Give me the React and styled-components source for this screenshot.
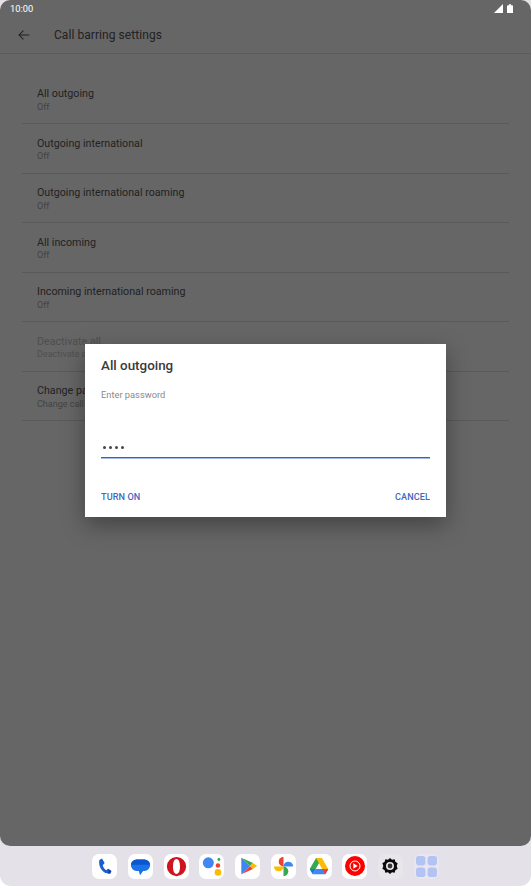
import React from 'react';
import styled, { createGlobalStyle } from 'styled-components';

const Global = createGlobalStyle`
  html, body { margin: 0; padding: 0; background: #fff; }
  body { font-family: Roboto, "Liberation Sans", sans-serif; }
`;

const Frame = styled.div`
  width: 531px; height: 886px; display: flex; flex-direction: column;
  background: #e5e1e8; border-radius: 0 0 11px 11px; overflow: hidden; position: relative;
`;
const Screen = styled.div`
  height: 846px; flex: none; position: relative; background: #fff;
  border-radius: 10px; overflow: hidden; display: flex; flex-direction: column;
`;
const Scrim = styled.div`
  position: absolute; inset: 0; background: rgba(0,0,0,.6); z-index: 1;
`;
const StatusBar = styled.div`
  height: 16px; padding: 0 18px 0 10px; display: flex; align-items: center; justify-content: space-between;
  position: relative; z-index: 2; color: #fff; font-size: 9.3px; font-weight: 400; flex: none;
`;
const StatusIcons = styled.div`display: flex; align-items: center; gap: 4px;`;
const AppBar = styled.div`
  height: 38px; flex: none; box-sizing: border-box; display: flex; align-items: center; gap: 23px; padding: 0 0 0 17px;
  border-bottom: 1px solid #e4e4e4; color: #555; font-size: 12px; letter-spacing: .06px;
`;
const List = styled.div`padding: 20.6px 22px 0; display: flex; flex-direction: column;`;
const Row = styled.div`
  height: 49.5px; box-sizing: border-box; padding: 12.5px 15px 0; border-bottom: 1px solid #dedede;
  display: flex; flex-direction: column;
`;
const RowTitle = styled.div`font-size: 10.7px; line-height: 13px; color: ${p => p.$off ? '#c4c4c4' : '#555'};`;
const RowSub = styled.div`font-size: 9px; line-height: 13px; margin-top: .9px; color: ${p => p.$off ? '#c8c8c8' : '#a8a8a8'};`;

const Dialog = styled.div`
  position: absolute; left: 85px; top: 344px; width: 361px; height: 173px; background: #fff; z-index: 3;
  box-shadow: 0 8px 22px rgba(0,0,0,.35); box-sizing: border-box; padding: 14px 16px 0;
  display: flex; flex-direction: column;
`;
const DialogTitle = styled.div`font-size: 13.4px; line-height: 16px; font-weight: 500; color: #3a3a3a;`;
const Prompt = styled.div`font-size: 9.3px; line-height: 12px; margin-top: 14.5px; color: #8a8a8a;`;
const Field = styled.div`
  margin-top: 36px; height: 21px; border-bottom: 1px solid #3563bd; box-shadow: 0 1px 0 #a3bae8;
  display: flex; align-items: center; gap: 3.1px; padding: 2px 0 0 2px; box-sizing: border-box;
`;
const Dot = styled.span`width: 3px; height: 3px; border-radius: 50%; background: #444; flex: none;`;
const Actions = styled.div`display: flex; justify-content: space-between; margin-top: 33px;`;
const Action = styled.div`font-size: 9.1px; line-height: 12px; font-weight: 500; color: #3f68bd; letter-spacing: .1px;`;

const Dock = styled.div`
  flex: 1; display: flex; justify-content: center; align-items: center; gap: 10.7px;
`;
const Tile = styled.div`
  width: 25px; height: 25px; border-radius: 7px; flex: none; display: flex; align-items: center; justify-content: center;
  background: ${p => p.$bg || '#fff'};
`;

const Back = () => (
  <svg width="14" height="14" viewBox="0 0 24 24" fill="none" stroke="#555" strokeWidth="1.8">
    <path d="M21 12H4M11 4.5 3.5 12l7.5 7.5" />
  </svg>
);
const Signal = () => (
  <svg width="9" height="9" viewBox="0 0 9 9"><path d="M9 0v9H0z" fill="#fff" /></svg>
);
const Battery = () => (
  <svg width="6" height="9" viewBox="0 0 6 9"><path d="M1 1.2h1.2V0h1.6v1.2H5a1 1 0 0 1 1 .8V9H0V2a1 1 0 0 1 1-.8z" fill="#fff" /></svg>
);

const Phone = () => (
  <svg width="18" height="18" viewBox="0 0 24 24">
    <path d="M8 2 4.500 4C3.500 8 4.500 13 7.500 17s7 5.500 11.500 5l1.500-3.500-4.500-3-2.500 2c-2-.8-4-4-4.500-6.500L11.500 8z" fill="#1a5fd0" />
    <path d="M16 15.500l4.500 3L19 22c-1 .1-2 .1-3.500-.2l1.500-1.800z" fill="#123f9c" />
  </svg>
);
const Messages = () => (
  <svg width="21" height="21" viewBox="0 0 24 24">
    <path d="M7.500 4h9a6.500 6.500 0 0 1 0 13H15l-3.500 5L10 17H7.500a6.500 6.500 0 0 1 0-13z" fill="#1a73e8" />
    <path d="M7.500 4h9A6.500 6.500 0 0 1 23 10H1a6.500 6.500 0 0 1 6.500-6z" fill="#0b57cf" />
  </svg>
);
const Opera = () => (
  <svg width="21" height="21" viewBox="0 0 24 24">
    <path fillRule="evenodd" d="M12 1a11 11 0 1 1 0 22 11 11 0 0 1 0-22zm0 2.500c-2.600 0-4 3.800-4 8.500s1.400 8.500 4 8.500 4-3.800 4-8.500-1.400-8.500-4-8.500z" fill="#cf1420" />
  </svg>
);
const Assistant = () => (
  <svg width="22" height="22" viewBox="0 0 24 24">
    <circle cx="8" cy="8.500" r="6" fill="#4285f4" />
    <circle cx="18.500" cy="11.500" r="2.500" fill="#ea4335" />
    <circle cx="18.500" cy="19" r="3.600" fill="#fbbc04" />
    <circle cx="19.500" cy="5" r="1.600" fill="#34a853" />
  </svg>
);
const Play = () => (
  <svg width="20" height="20" viewBox="0 0 24 24">
    <path d="M4 2v20l10.500-10z" fill="#4285f4" />
    <path d="M4 2l10.500 10 3.500-3.500z" fill="#34a853" />
    <path d="M4 22l10.500-10 3.500 3.500z" fill="#ea4335" />
    <path d="M18 8.500 23 12l-5 3.500L14.500 12z" fill="#fbbc04" />
  </svg>
);
const Photos = () => (
  <svg width="21" height="21" viewBox="0 0 24 24">
    <path d="M12 12H1a5.500 5.500 0 0 0 11 0z" fill="#fbbc04" />
    <path d="M12 12V1a5.500 5.500 0 0 0 0 11z" fill="#ea4335" />
    <path d="M12 12h11a5.500 5.500 0 0 0-11 0z" fill="#4285f4" />
    <path d="M12 12v11a5.500 5.500 0 0 0 0-11z" fill="#34a853" />
  </svg>
);
const Drive = () => (
  <svg width="20" height="20" viewBox="0 0 24 24">
    <path d="M8.500 2.500h7L8 15.500H.8z" fill="#34a853" />
    <path d="M15.500 2.500 23.200 16h-7.300L8.500 2.500z" fill="#fbbc04" />
    <path d="M8 15.500h15.200L19.500 22H4.300z" fill="#4285f4" />
    <path d="M.8 15.500H8L4.300 22z" fill="#1a73e8" />
    <path d="M16 16h7.200l-3.700 6z" fill="#ea4335" />
  </svg>
);
const YTMusic = () => (
  <svg width="20" height="20" viewBox="0 0 24 24">
    <circle cx="12" cy="12" r="12" fill="#f00" />
    <circle cx="12" cy="12" r="6" fill="none" stroke="#fff" strokeWidth="1.200" />
    <path d="M10 8.700v6.600l5.200-3.300z" fill="#fff" />
  </svg>
);
const Gear = () => (
  <svg width="16" height="16" viewBox="0 0 24 24">
    <path fillRule="evenodd" fill="#0a0a0a" d="M12 0l3 2.500 4-.5 1 3.800 3.500 2.200L22 12l1.500 4-3.500 2.200-1 3.800-4-.5L12 24l-3-2.500-4 .5-1-3.800L.5 16 2 12 .5 8 4 5.800 5 2l4 .5zM12 6a6 6 0 1 0 0 12 6 6 0 0 0 0-12z" />
    <circle cx="12" cy="12" r="3.600" fill="#333" />
  </svg>
);
const Grid = () => (
  <svg width="21" height="21" viewBox="0 0 21 21" fill="#b3c3f3">
    <rect x="0" y="0" width="9.400" height="9.400" rx="2.800" />
    <rect x="11.600" y="0" width="9.400" height="9.400" rx="2.800" />
    <rect x="0" y="11.600" width="9.400" height="9.400" rx="2.800" />
    <rect x="11.600" y="11.600" width="9.400" height="9.400" rx="2.800" />
  </svg>
);

const rows = [
  ['All outgoing', 'Off'],
  ['Outgoing international', 'Off'],
  ['Outgoing international roaming', 'Off'],
  ['All incoming', 'Off'],
  ['Incoming international roaming', 'Off'],
  ['Deactivate all', 'Deactivate all call barring settings', true],
  ['Change password', 'Change call barring password'],
];

const apps = [
  [Phone], [Messages], [Opera], [Assistant], [Play], [Photos], [Drive], [YTMusic],
  [Gear, '#e8e6ea'], [Grid, '#e9e6ef'],
];

export default function App() {
  return (
    <>
      <Global />
      <Frame>
        <Screen>
          <StatusBar>
            <span>10:00</span>
            <StatusIcons><Signal /><Battery /></StatusIcons>
          </StatusBar>
          <AppBar><Back /><span>Call barring settings</span></AppBar>
          <List>
            {rows.map(([t, s, off]) => (
              <Row key={t}>
                <RowTitle $off={off}>{t}</RowTitle>
                <RowSub $off={off}>{s}</RowSub>
              </Row>
            ))}
          </List>
          <Scrim />
          <Dialog>
            <DialogTitle>All outgoing</DialogTitle>
            <Prompt>Enter password</Prompt>
            <Field><Dot /><Dot /><Dot /><Dot /></Field>
            <Actions><Action>TURN ON</Action><Action>CANCEL</Action></Actions>
          </Dialog>
        </Screen>
        <Dock>
          {apps.map(([Icon, bg], i) => (
            <Tile key={i} $bg={bg}><Icon /></Tile>
          ))}
        </Dock>
      </Frame>
    </>
  );
}
